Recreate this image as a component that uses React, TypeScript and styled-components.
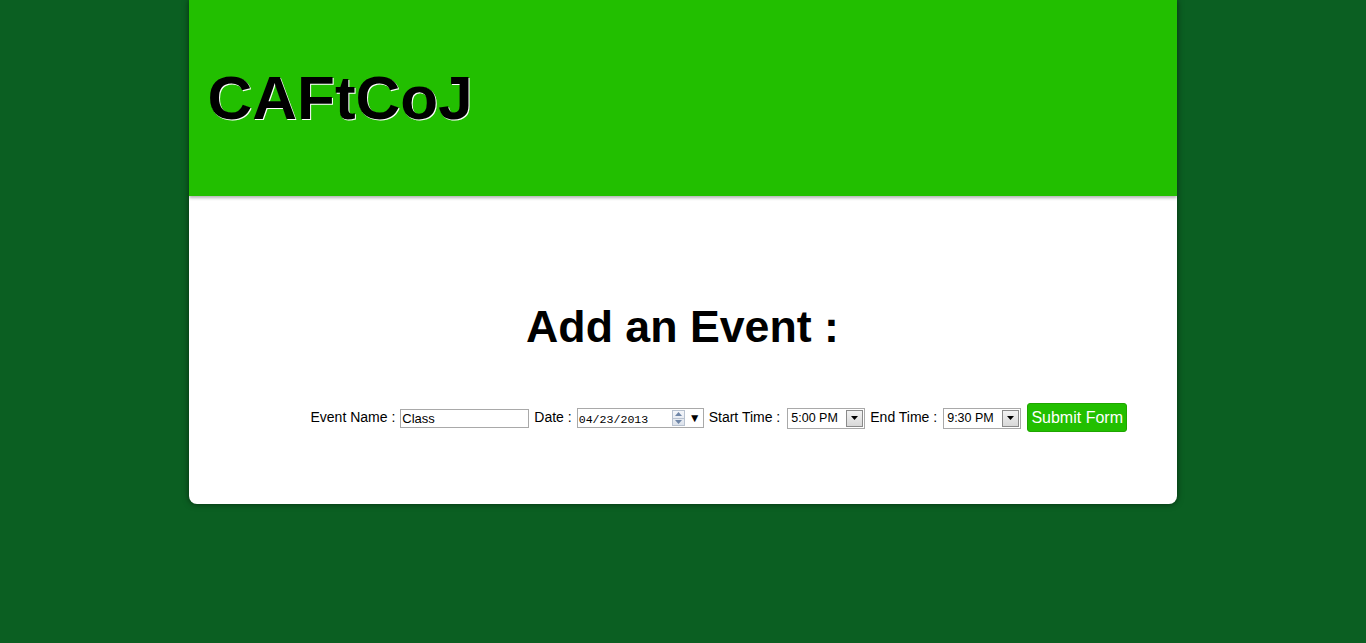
import React from "react";
import styled, { createGlobalStyle } from "styled-components";

const Global = createGlobalStyle`
  html, body { margin: 0; padding: 0; }
  body {
    background: #0b5f22;
    font-family: "Liberation Sans", Arial, sans-serif;
    min-height: 643px;
  }
`;

const Page = styled.div`
  display: flex;
  justify-content: center;
`;

const Card = styled.div`
  width: 988px;
  margin-left: -1px;
  background: #ffffff;
  border-radius: 0 0 8px 8px;
  box-shadow: 0 0 6px rgba(0, 0, 0, 0.55);
  overflow: hidden;
`;

const Header = styled.header`
  height: 196px;
  box-sizing: border-box;
  padding: 62px 0 0 19px;
  background: #22bf00;
  box-shadow: 0 2px 3px rgba(0, 0, 0, 0.3);
  position: relative;
  z-index: 1;
`;

const Logo = styled.div`
  margin: 0;
  font-size: 62px;
  font-weight: bold;
  line-height: normal;
  color: #000;
  text-shadow: 1px 1px 0 #fff;
`;

const Content = styled.main`
  padding: 106px 0 72px;
`;

const Title = styled.h1`
  margin: 0;
  font-size: 44.7px;
  font-weight: bold;
  line-height: normal;
  text-align: center;
  color: #000;
`;

const FormRow = styled.form`
  margin-top: 51px;
  height: 29px;
  display: flex;
  align-items: center;
  padding-left: 122px;
  font-size: 14px;
  color: #000;
`;

const Label = styled.label<{ $gap?: number }>`
  margin-right: ${(p) => p.$gap ?? 5}px;
  margin-top: -2px;
  white-space: nowrap;
`;

const TextInput = styled.input`
  box-sizing: border-box;
  width: 129px;
  height: 19px;
  margin: 1px 5px 0 0;
  padding: 0 1px;
  border: 1px solid #a9a9a9;
  font-family: "Liberation Sans", Arial, sans-serif;
  font-size: 13px;
  color: #000;
  outline: none;
`;

const DateBox = styled.div`
  box-sizing: border-box;
  width: 127px;
  height: 20px;
  margin: 1px 5px 0 0;
  border: 1px solid #a9a9a9;
  display: flex;
  align-items: center;
  padding-left: 1px;
`;

const DateText = styled.span`
  flex: 1;
  font-family: "Liberation Mono", "Courier New", monospace;
  font-size: 11.6px;
  padding-top: 2px;
`;

const Spinner = styled.div`
  width: 13px;
  height: 16px;
  border: 1px solid #b8c2d0;
  box-sizing: border-box;
  display: flex;
  flex-direction: column;
  margin-right: 4px;
  background: linear-gradient(#f4f6fa, #dde3ec);
`;

const SpinHalf = styled.div`
  flex: 1;
  display: flex;
  align-items: center;
  justify-content: center;
  & + & { border-top: 1px solid #b8c2d0; }
`;

const Caret = styled.span`
  font-size: 12px;
  margin-right: 2px;
  line-height: 1;
`;

const SelectBox = styled.div`
  box-sizing: border-box;
  width: 78px;
  height: 21px;
  margin: 1px 5px 0 0;
  border: 1px solid #a9a9a9;
  display: flex;
  align-items: center;
  padding-left: 3px;
  font-size: 12.5px;
  background: #fff;
`;

const SelectText = styled.span`
  flex: 1;
`;

const DropButton = styled.span`
  box-sizing: border-box;
  width: 17px;
  height: 17px;
  margin-right: 1px;
  border: 1px solid #8a8a8a;
  background: linear-gradient(#f2f2f2, #d8d8d8);
  display: flex;
  align-items: center;
  justify-content: center;
`;

const Submit = styled.button`
  box-sizing: border-box;
  width: 100px;
  height: 29px;
  margin-left: 1px;
  border: 1px solid #1fa600;
  border-radius: 3px;
  background: #22bf00;
  color: #fff;
  font-family: "Liberation Sans", Arial, sans-serif;
  font-size: 16px;
  padding: 0;
  white-space: nowrap;
  cursor: pointer;
`;

const Tri = ({ up }: { up?: boolean }) => (
  <svg width="7" height="4" viewBox="0 0 7 4">
    <path d={up ? "M0 4 L3.5 0 L7 4 Z" : "M0 0 L7 0 L3.5 4 Z"} fill="#6f86a8" />
  </svg>
);

const Select = ({ value }: { value: string }) => (
  <SelectBox>
    <SelectText>{value}</SelectText>
    <DropButton>
      <svg width="7" height="4" viewBox="0 0 7 4">
        <path d="M0 0 L7 0 L3.5 4 Z" fill="#000" />
      </svg>
    </DropButton>
  </SelectBox>
);

export default function App() {
  return (
    <>
      <Global />
      <Page>
        <Card>
          <Header>
            <Logo>CAFtCoJ</Logo>
          </Header>
          <Content>
            <Title>Add an Event :</Title>
            <FormRow onSubmit={(e) => e.preventDefault()}>
              <Label>Event Name :</Label>
              <TextInput defaultValue="Class" />
              <Label>Date :</Label>
              <DateBox>
                <DateText>04/23/2013</DateText>
                <Spinner>
                  <SpinHalf><Tri up /></SpinHalf>
                  <SpinHalf><Tri /></SpinHalf>
                </Spinner>
                <Caret>▼</Caret>
              </DateBox>
              <Label $gap={7}>Start Time :</Label>
              <Select value="5:00 PM" />
              <Label $gap={6}>End Time :</Label>
              <Select value="9:30 PM" />
              <Submit type="submit">Submit Form</Submit>
            </FormRow>
          </Content>
        </Card>
      </Page>
    </>
  );
}
